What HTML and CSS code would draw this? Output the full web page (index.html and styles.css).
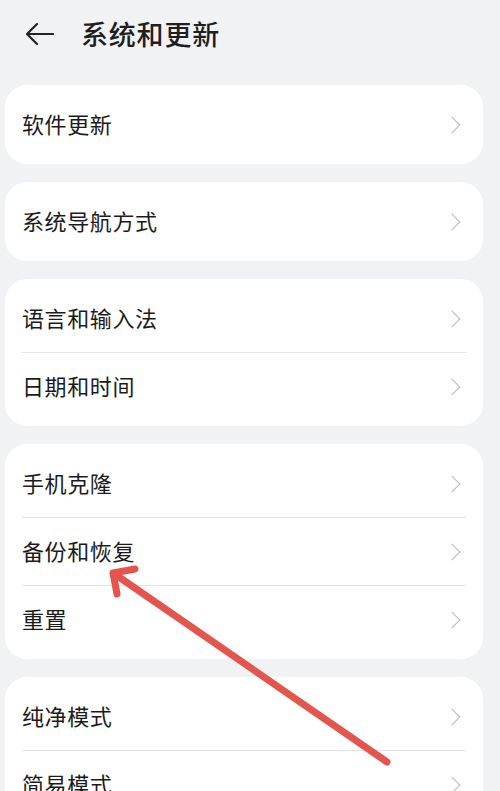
FILE: index.html
```html
<!DOCTYPE html>
<html lang="zh-CN">
  <head>
    <meta charset="UTF-8" />
    <meta name="viewport" content="width=device-width, initial-scale=1.0" />
    <title>系统和更新</title>
    <link rel="stylesheet" href="styles.css">
  </head>
  <body>
    <div class="page">
      <header class="top-bar">
        <svg class="back-icon" width="30" height="24" viewBox="0 0 30 24">
          <path d="M13 2 L3 12 L13 22 M3 12 L29 12" fill="none" stroke="#222" stroke-width="2.2" stroke-linecap="round" stroke-linejoin="round" />
        </svg>
        <h1 class="page-title">系统和更新</h1>
      </header>

      <div class="card-list">
        <div class="card">
          <div class="row"><span class="row-label">软件更新</span><span class="chevron"></span></div>
        </div>
        <div class="card">
          <div class="row"><span class="row-label">系统导航方式</span><span class="chevron"></span></div>
        </div>
        <div class="card">
          <div class="row"><span class="row-label">语言和输入法</span><span class="chevron"></span></div>
          <div class="row"><span class="row-label">日期和时间</span><span class="chevron"></span></div>
        </div>
        <div class="card">
          <div class="row"><span class="row-label">手机克隆</span><span class="chevron"></span></div>
          <div class="row"><span class="row-label">备份和恢复</span><span class="chevron"></span></div>
          <div class="row"><span class="row-label">重置</span><span class="chevron"></span></div>
        </div>
        <div class="card">
          <div class="row"><span class="row-label">纯净模式</span><span class="chevron"></span></div>
          <div class="row"><span class="row-label">简易模式</span><span class="chevron"></span></div>
        </div>
      </div>
    </div>

    <!-- annotation arrow drawn over the screenshot -->
    <svg class="mark-arrow" width="500" height="791" viewBox="0 0 500 791">
      <g fill="none" stroke="#e4554e" stroke-width="7" stroke-linecap="round" stroke-linejoin="round">
        <path d="M387 762 L116 575" />
        <path d="M135 569 L113 573 L117 594" />
      </g>
    </svg>
  </body>
</html>
```

FILE: styles.css
```css
body {
  margin: 0;
  padding: 0;
  height: 791px;
  overflow: hidden;
  background: #f1f2f4;
  font-family: "Noto Sans CJK SC", "Noto Sans", sans-serif;
  color: #1b1b1b;
  position: relative;
}

.page {
  padding: 0 17px 0 5px;
}

.top-bar {
  height: 66px;
  display: flex;
  align-items: center;
  padding-left: 19px;
}

.back-icon {
  flex: none;
  margin-top: 2px;
}

.page-title {
  margin: 0 0 0 27px;
  font-size: 27px;
  line-height: 1;
  font-weight: 500;
  color: #1f1f1f;
  letter-spacing: 0.8px;
}

.card-list {
  display: flex;
  flex-direction: column;
  gap: 18px;
  padding-top: 19px;
}

.card {
  background: #fff;
  border-radius: 22px;
  padding: 6px 0;
}

.row {
  height: 67px;
  margin: 0 17px;
  display: flex;
  align-items: center;
  justify-content: space-between;
}

.row + .row {
  border-top: 1px solid #e3e3e5;
}

.row-label {
  font-size: 22px;
  line-height: 1;
  padding-bottom: 3px;
  letter-spacing: 0.6px;
}

.chevron {
  width: 11px;
  height: 11px;
  margin-right: 8px;
  border-top: 1.5px solid #b9b9bb;
  border-right: 1.5px solid #b9b9bb;
  transform: rotate(45deg);
}

.mark-arrow {
  position: absolute;
  left: 0;
  top: 0;
  pointer-events: none;
}
```
